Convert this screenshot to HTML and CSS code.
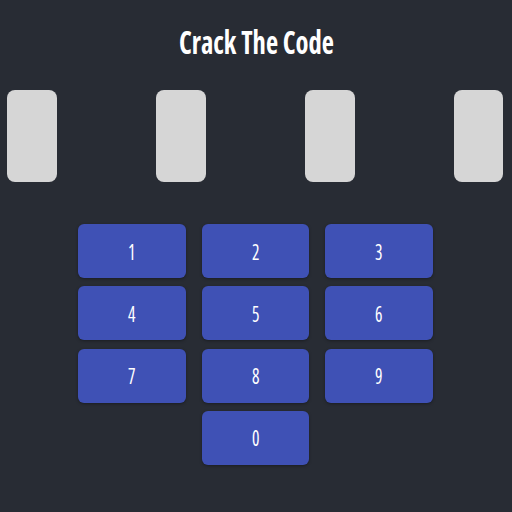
FILE: index.html
```html
<!DOCTYPE html>
<html lang="en">
<head>
    <meta charset="UTF-8">
    <meta name="viewport" content="width=device-width, initial-scale=1.0">
    <title>Crack The Code</title>
    <link rel="stylesheet" href="styles.css">
</head>
<body>
    <div id="game">
        <h1 class="game-title">Crack The Code</h1>

        <div class="code-slots">
            <div class="code-slot"></div>
            <div class="code-slot"></div>
            <div class="code-slot"></div>
            <div class="code-slot"></div>
        </div>

        <div class="keypad">
            <button class="key"><span>1</span></button>
            <button class="key"><span>2</span></button>
            <button class="key"><span>3</span></button>
            <button class="key"><span>4</span></button>
            <button class="key"><span>5</span></button>
            <button class="key"><span>6</span></button>
            <button class="key"><span>7</span></button>
            <button class="key"><span>8</span></button>
            <button class="key"><span>9</span></button>
            <button class="key key-zero"><span>0</span></button>
        </div>
    </div>
</body>
</html>
```

FILE: styles.css
```css
* {
    margin: 0;
    padding: 0;
    box-sizing: border-box;
    font-family: 'Open Sans', 'Liberation Sans', sans-serif;
}

body {
    background-color: #282c34;
    height: 100vh;
    overflow: hidden;
}

#game {
    display: flex;
    flex-direction: column;
    align-items: center;
}

.game-title {
    color: white;
    font-size: 32px;
    font-weight: 700;
    font-stretch: 75%;
    line-height: 40px;
    margin-top: 22px;
    transform: scaleX(0.83);
}

.code-slots {
    width: 100%;
    display: flex;
    justify-content: space-between;
    padding: 0 8.5px 0 7.3px;
    margin-top: 28px;
}

.code-slot {
    width: 49.5px;
    height: 92px;
    background-color: #d6d6d6;
    border-radius: 8px;
}

.keypad {
    display: grid;
    grid-template-columns: repeat(3, 107.5px);
    column-gap: 16px;
    row-gap: 8.3px;
    margin-top: 42px;
    margin-right: 1px;
}

.key {
    height: 54px;
    background-color: #3f51b5;
    color: white;
    border: none;
    border-radius: 6px;
    box-shadow: 0 1px 3px rgba(0, 0, 0, 0.35);
    cursor: pointer;
}

.key span {
    display: inline-block;
    font-size: 22px;
    font-stretch: 75%;
    transform: scaleX(0.8);
    margin-top: -1px;
}

.key-zero {
    grid-column: 2;
}
```
